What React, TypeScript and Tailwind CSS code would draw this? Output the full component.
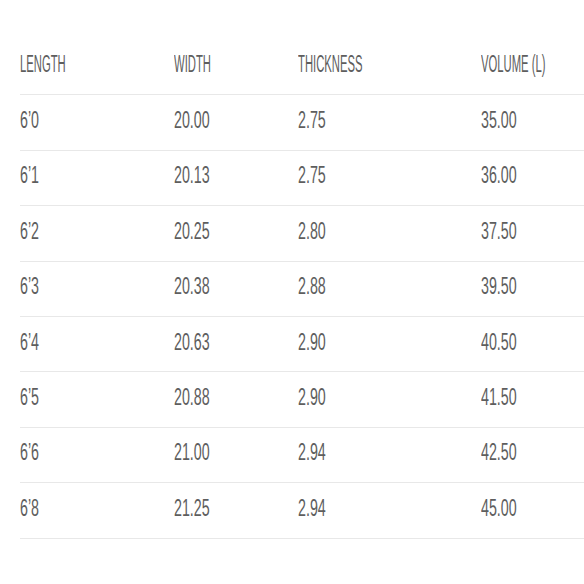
const headers = ["LENGTH", "WIDTH", "THICKNESS", "VOLUME (L)"]

const rows = [
  ["6’0", "20.00", "2.75", "35.00"],
  ["6’1", "20.13", "2.75", "36.00"],
  ["6’2", "20.25", "2.80", "37.50"],
  ["6’3", "20.38", "2.88", "39.50"],
  ["6’4", "20.63", "2.90", "40.50"],
  ["6’5", "20.88", "2.90", "41.50"],
  ["6’6", "21.00", "2.94", "42.50"],
  ["6’8", "21.25", "2.94", "45.00"],
]

const cols = "grid grid-cols-[154px_124px_183px_1fr]"

export default function App() {
  return (
    <div className="w-[584px] h-[584px] bg-white overflow-hidden pt-[40px] pl-[20px] font-['Liberation_Sans_Narrow','Liberation_Sans',sans-serif] text-[#5e5e5e] text-[23px] leading-none">
      {/* Header */}
      <div className={`${cols} h-[55.4px] border-b border-[#e8e8e8] pb-[6px] items-center`}>
        {headers.map((h) => (
          <span key={h} className="inline-block whitespace-nowrap origin-left scale-x-[0.49]">
            {h}
          </span>
        ))}
      </div>

      {/* Body */}
      {rows.map((r) => (
        <div key={r[0]} className={`${cols} h-[55.4px] border-b border-[#e8e8e8] pb-[4px] items-center`}>
          {r.map((c, i) => (
            <span key={i} className="inline-block whitespace-nowrap origin-left scale-x-[0.62]">
              {c}
            </span>
          ))}
        </div>
      ))}
    </div>
  )
}
